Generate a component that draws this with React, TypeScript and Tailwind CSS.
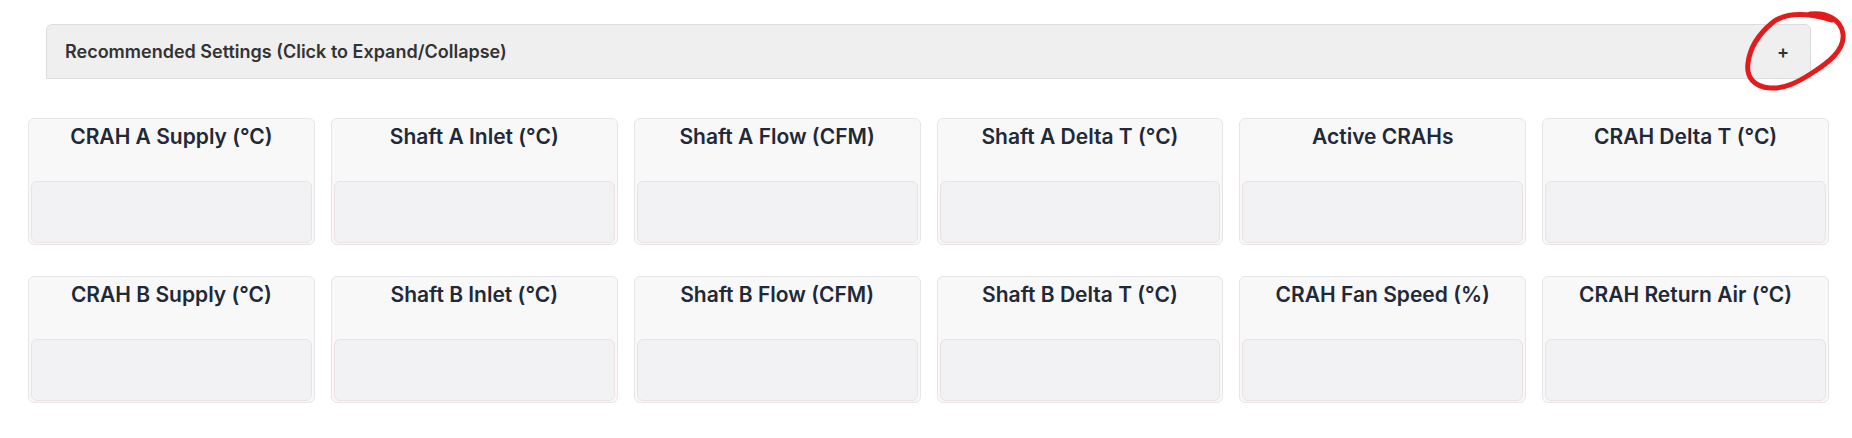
const rowA = [
  "CRAH A Supply (°C)",
  "Shaft A Inlet (°C)",
  "Shaft A Flow (CFM)",
  "Shaft A Delta T (°C)",
  "Active CRAHs",
  "CRAH Delta T (°C)",
];

const rowB = [
  "CRAH B Supply (°C)",
  "Shaft B Inlet (°C)",
  "Shaft B Flow (CFM)",
  "Shaft B Delta T (°C)",
  "CRAH Fan Speed (%)",
  "CRAH Return Air (°C)",
];

function MetricCard({ title }: { title: string }) {
  return (
    <div className="h-[127px] flex flex-col rounded-md border border-[#e6e6e8] bg-[#f8f8f9] px-[2px] pb-[1px]">
      <h3 className="pt-[4px] text-center text-[21px] leading-7 font-semibold text-[#1f2937]">{title}</h3>
      <div className="mt-auto h-[62px] rounded-md border border-[#efe0e4] bg-[#f2f2f4]" />
    </div>
  );
}

export default function App() {
  return (
    <div className="relative min-h-[438px] bg-white pl-[28px] pr-[23px] pt-[24px] font-['Inter',sans-serif]">
      <div className="mx-[18px] flex h-[55px] cursor-pointer items-center justify-between rounded-t-md border border-[#dcdcdc] bg-[#efefef] pl-[18px] pr-[21px]">
        <span className="text-[18px] font-semibold text-[#333]">Recommended Settings (Click to Expand/Collapse)</span>
        <span className="text-[18px] font-semibold text-[#333]">+</span>
      </div>

      <div className="mt-[39px] grid grid-cols-6 gap-x-4 gap-y-[31px]">
        {rowA.map((t) => (
          <MetricCard key={t} title={t} />
        ))}
        {rowB.map((t) => (
          <MetricCard key={t} title={t} />
        ))}
      </div>

      {/* hand-drawn highlight around the toggle */}
      <svg className="pointer-events-none absolute left-[1740px] top-[5px]" width="110" height="95" viewBox="0 0 110 95" fill="none">
        <path
          d="M70 9 C86 7 101 14 103 29 C105 45 88 58 72 68 C58 77 45 84 30 83 C14 82 6 72 8 58 C10 42 20 28 32 18 C44 8 62 6 92 15"
          stroke="#e31b1b"
          strokeWidth="5"
          strokeLinecap="round"
          strokeLinejoin="round"
        />
      </svg>
    </div>
  );
}
